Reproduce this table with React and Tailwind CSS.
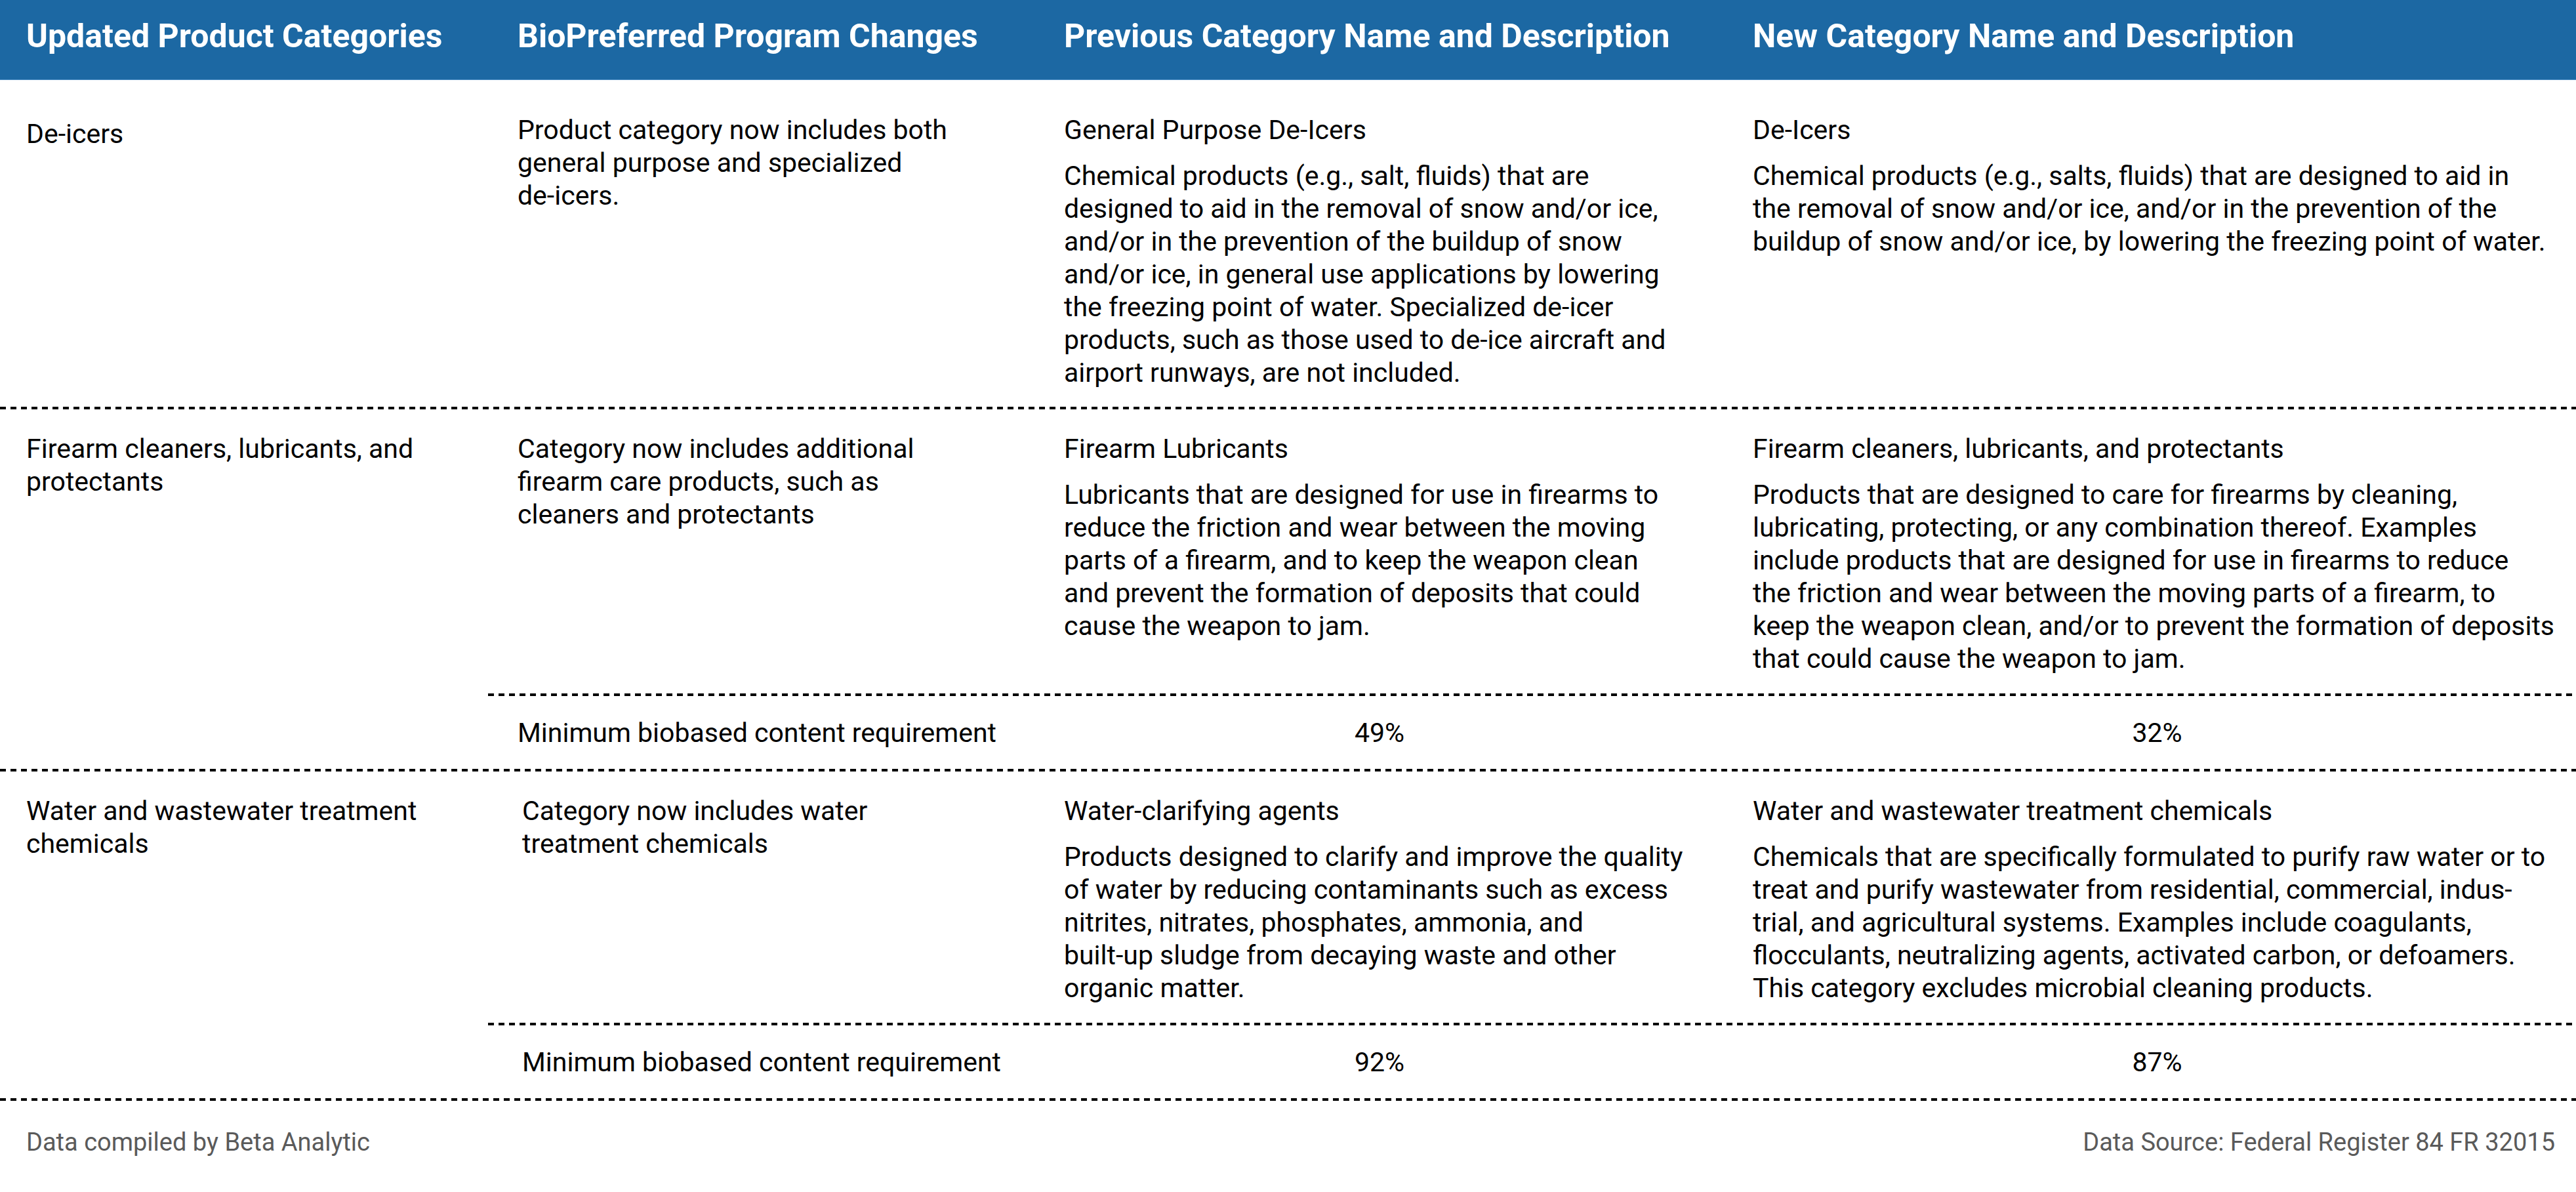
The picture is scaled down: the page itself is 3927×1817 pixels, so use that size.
import React from "react";

const rows = [
  {
    id: 1,
    category: ["De-icers"],
    change: ["Product category now includes both", "general purpose and specialized", "de-icers."],
    prevTitle: "General Purpose De-Icers",
    prevDesc: [
      "Chemical products (e.g., salt, fluids) that are",
      "designed to aid in the removal of snow and/or ice,",
      "and/or in the prevention of the buildup of snow",
      "and/or ice, in general use applications by lowering",
      "the freezing point of water. Specialized de-icer",
      "products, such as those used to de-ice aircraft and",
      "airport runways, are not included.",
    ],
    newTitle: "De-Icers",
    newDesc: [
      "Chemical products (e.g., salts, fluids) that are designed to aid in",
      "the removal of snow and/or ice, and/or in the prevention of the",
      "buildup of snow and/or ice, by lowering the freezing point of water.",
    ],
  },
  {
    id: 2,
    category: ["Firearm cleaners, lubricants, and", "protectants"],
    change: ["Category now includes additional", "firearm care products, such as", "cleaners and protectants"],
    prevTitle: "Firearm Lubricants",
    prevDesc: [
      "Lubricants that are designed for use in firearms to",
      "reduce the friction and wear between the moving",
      "parts of a firearm, and to keep the weapon clean",
      "and prevent the formation of deposits that could",
      "cause the weapon to jam.",
    ],
    newTitle: "Firearm cleaners, lubricants, and protectants",
    newDesc: [
      "Products that are designed to care for firearms by cleaning,",
      "lubricating, protecting, or any combination thereof. Examples",
      "include products that are designed for use in firearms to reduce",
      "the friction and wear between the moving parts of a firearm, to",
      "keep the weapon clean, and/or to prevent the formation of deposits",
      "that could cause the weapon to jam.",
    ],
    minimum: { prev: "49%", next: "32%" },
  },
  {
    id: 3,
    category: ["Water and wastewater treatment", "chemicals"],
    change: ["Category now includes water", "treatment chemicals"],
    prevTitle: "Water-clarifying agents",
    prevDesc: [
      "Products designed to clarify and improve the quality",
      "of water by reducing contaminants such as excess",
      "nitrites, nitrates, phosphates, ammonia, and",
      "built-up sludge from decaying waste and other",
      "organic matter.",
    ],
    newTitle: "Water and wastewater treatment chemicals",
    newDesc: [
      "Chemicals that are specifically formulated to purify raw water or to",
      "treat and purify wastewater from residential, commercial, indus-",
      "trial, and agricultural systems. Examples include coagulants,",
      "flocculants, neutralizing agents, activated carbon, or defoamers.",
      "This category excludes microbial cleaning products.",
    ],
    minimum: { prev: "92%", next: "87%" },
    nudge: true,
  },
];

const Lines = ({ lines }) => (
  <div>
    {lines.map((l, i) => (
      <div key={i} className="whitespace-nowrap">
        {l}
      </div>
    ))}
  </div>
);

const Dashed = () => (
  <div className="h-[4px] w-full bg-[repeating-linear-gradient(90deg,#000_0_9px,transparent_9px_16px)]" />
);

const cols = "grid grid-cols-[834px_1050px_1fr]";

const BioPreferredTable = () => {
  return (
    <div className="w-[3927px] min-h-[1817px] bg-white text-black font-['Roboto',sans-serif] text-[41px] leading-[50px]">
      {/* header */}
      <div className="h-[122px] bg-[#1c68a3] border-b border-[#4a8cc4] text-white font-bold text-[50px] leading-[50px] pt-[30px] flex">
        <div className="w-[744px] pl-10">Updated Product Categories</div>
        <div className={cols + " flex-1"}>
          <div className="pl-[45px]">BioPreferred Program Changes</div>
          <div className="pl-[44px]">Previous Category Name and Description</div>
          <div className="pl-[44px]">New Category Name and Description</div>
        </div>
      </div>

      {rows.map((r) => (
        <div key={r.id}>
          <div className="flex">
            <div className={"w-[744px] pl-10 " + (r.id === 1 ? "pt-[57px]" : "pt-[35px]")}>
              <Lines lines={r.category} />
            </div>
            <div className="flex-1 flex flex-col">
              <div className={cols + (r.id === 1 ? " pt-[51px] pb-[27px]" : " pt-[35px] pb-7")}>
                <div className={r.nudge ? "pl-[52px]" : "pl-[45px]"}>
                  <Lines lines={r.change} />
                </div>
                <div className="pl-[44px]">
                  <div>{r.prevTitle}</div>
                  <div className="mt-5">
                    <Lines lines={r.prevDesc} />
                  </div>
                </div>
                <div className="pl-[44px]">
                  <div>{r.newTitle}</div>
                  <div className="mt-5">
                    <Lines lines={r.newDesc} />
                  </div>
                </div>
              </div>
              {r.minimum && (
                <>
                  <Dashed />
                  <div className={cols + " pt-[31px] pb-[30px]"}>
                    <div className={r.nudge ? "pl-[52px]" : "pl-[45px]"}>Minimum biobased content requirement</div>
                    <div className="text-center">{r.minimum.prev}</div>
                    <div className="text-center pl-[22px]">{r.minimum.next}</div>
                  </div>
                </>
              )}
            </div>
          </div>
          <Dashed />
        </div>
      ))}

      {/* footer */}
      <div className="flex justify-between pl-10 pr-8 pt-[38px] text-[38px] leading-[50px] text-[#5a5a5a]">
        <div>Data compiled by Beta Analytic</div>
        <div>Data Source: Federal Register 84 FR 32015</div>
      </div>
    </div>
  );
};

export default function App() {
  return <BioPreferredTable />;
}
